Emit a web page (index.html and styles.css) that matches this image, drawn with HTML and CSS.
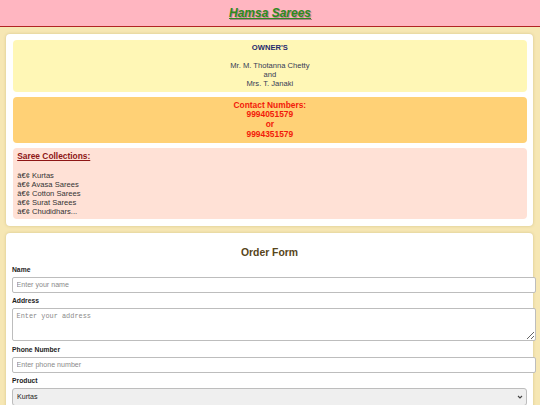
FILE: index.html
```html
<!DOCTYPE html>
<html lang="en">
<head>
<meta charset="utf-8">
<title>Hamsa Sarees</title>
<link rel="stylesheet" href="styles.css">
</head>
<body>
<header class="site-header">
  <h1 class="site-title">Hamsa Sarees</h1>
</header>
<main class="page">
  <section class="card info-card">
    <div class="box owners">
      <div class="owners-title">OWNER'S</div>
      <div class="owners-names">
        <span>&nbsp;</span>
        <span>Mr. M. Thotanna Chetty</span>
        <span>and</span>
        <span>Mrs. T. Janaki</span>
      </div>
    </div>
    <div class="box contact">
      <span>Contact Numbers:</span>
      <span>9994051579</span>
      <span>or</span>
      <span>9994351579</span>
    </div>
    <div class="box collections">
      <div class="collections-title">Saree Collections:</div>
      <ul class="collections-list">
        <li>â€¢ Kurtas</li>
        <li>â€¢ Avasa Sarees</li>
        <li>â€¢ Cotton Sarees</li>
        <li>â€¢ Surat Sarees</li>
        <li>â€¢ Chudidhars...</li>
      </ul>
    </div>
  </section>
  <section class="card form-card">
    <h2 class="form-title">Order Form</h2>
    <form class="order-form">
      <label class="field-label" for="name">Name</label>
      <input class="field-input" id="name" type="text" placeholder="Enter your name">
      <label class="field-label" for="address">Address</label>
      <textarea class="field-textarea" id="address" placeholder="Enter your address"></textarea>
      <label class="field-label" for="phone">Phone Number</label>
      <input class="field-input" id="phone" type="text" placeholder="Enter phone number">
      <label class="field-label" for="product">Product</label>
      <div class="select-wrap">
        <select class="field-select" id="product">
          <option>Kurtas</option>
          <option>Avasa Sarees</option>
          <option>Cotton Sarees</option>
          <option>Surat Sarees</option>
          <option>Chudidhars</option>
        </select>
        <svg class="select-arrow" width="6" height="4" viewBox="0 0 6 4" aria-hidden="true">
          <path d="M1 1 L3 3 L5 1" fill="none" stroke="#444" stroke-width="1.1"/>
        </svg>
      </div>
    </form>
  </section>
</main>
</body>
</html>
```
FILE: styles.css
```css
* { margin: 0; padding: 0; }

html, body {
  background: #f6e7b4;
}

body {
  margin: 0;
  font-family: "Liberation Sans", Arial, sans-serif;
  color: #333;
}

.site-header {
  height: 26px;
  background: #ffb6c1;
  border-bottom: 1.5px solid #b02424;
  display: flex;
  align-items: center;
  justify-content: center;
}

.site-title {
  font-size: 12px;
  line-height: 26px;
  font-weight: bold;
  font-style: italic;
  text-decoration: underline;
  color: #2e8b1e;
  text-shadow: 1px 1px 1px rgba(0, 0, 0, 0.3);
}

.page {
  padding: 6.5px 7px 0 6px;
  display: flex;
  flex-direction: column;
  gap: 7px;
}

.card {
  background: #ffffff;
  border-radius: 4px;
  box-shadow: 0 0 3px rgba(120, 90, 20, 0.25);
}

.info-card {
  padding: 6px 6px 6.7px 6.7px;
  display: flex;
  flex-direction: column;
  gap: 5px;
}

.box {
  border-radius: 4px;
}

.owners {
  background: #fff7b6;
  padding: 3.6px 4px;
  text-align: center;
  font-size: 7.6px;
  line-height: 9px;
}

.owners-title {
  font-weight: bold;
  color: #1f2a6e;
}

.owners-names {
  display: flex;
  flex-direction: column;
  color: #333a55;
}

.contact {
  background: #ffd176;
  padding: 3.9px 4px;
  text-align: center;
  font-size: 8.4px;
  line-height: 9.75px;
  font-weight: bold;
  color: #f21a0a;
  display: flex;
  flex-direction: column;
}

.collections {
  background: #ffe1d6;
  padding: 3.7px 4.5px 3.5px;
}

.collections-title {
  font-size: 8.4px;
  line-height: 9.75px;
  font-weight: bold;
  text-decoration: underline;
  color: #8e1616;
  margin-bottom: 8.6px;
}

.collections-list {
  list-style: none;
  font-size: 7.6px;
  line-height: 9px;
  color: #333;
}

.form-card {
  padding: 6px 6px 20px 6px;
}

.form-title {
  text-align: center;
  font-size: 10.4px;
  line-height: 13px;
  font-weight: bold;
  color: #57451a;
  margin: 7.5px 0 7px;
}

.order-form {
  display: flex;
  flex-direction: column;
  align-items: flex-start;
}

.field-label {
  display: block;
  font-size: 6.75px;
  line-height: 7.8px;
  font-weight: bold;
  color: #222;
  margin-bottom: 2.6px;
}

.field-input,
.field-textarea {
  display: block;
  width: 100%;
  box-sizing: content-box;
  border: 1px solid #bdbdbd;
  border-radius: 2px;
  padding: 0 3.5px;
  font-size: 7.1px;
  color: #333;
  background: #fff;
}

.field-input {
  height: 14px;
  font-family: "Liberation Sans", Arial, sans-serif;
  margin-bottom: 4.6px;
}

.field-textarea {
  height: 24px;
  padding-top: 3.5px;
  padding-bottom: 3.5px;
  font-family: "Liberation Mono", "DejaVu Sans Mono", monospace;
  font-size: 6.9px;
  margin-bottom: 5.6px;
  resize: vertical;
}

.field-input::placeholder,
.field-textarea::placeholder {
  color: #8a8a8a;
}

.select-wrap {
  position: relative;
  width: 100%;
}

.field-select {
  display: block;
  width: 100%;
  height: 18px;
  -webkit-appearance: none;
  appearance: none;
  border: 1px solid #bdbdbd;
  border-radius: 3px;
  background-color: #efefef;
  font-family: "Liberation Sans", Arial, sans-serif;
  font-size: 7.1px;
  color: #222;
  padding: 0 4px;
}

.select-arrow {
  position: absolute;
  right: 4px;
  top: 7px;
}
```
